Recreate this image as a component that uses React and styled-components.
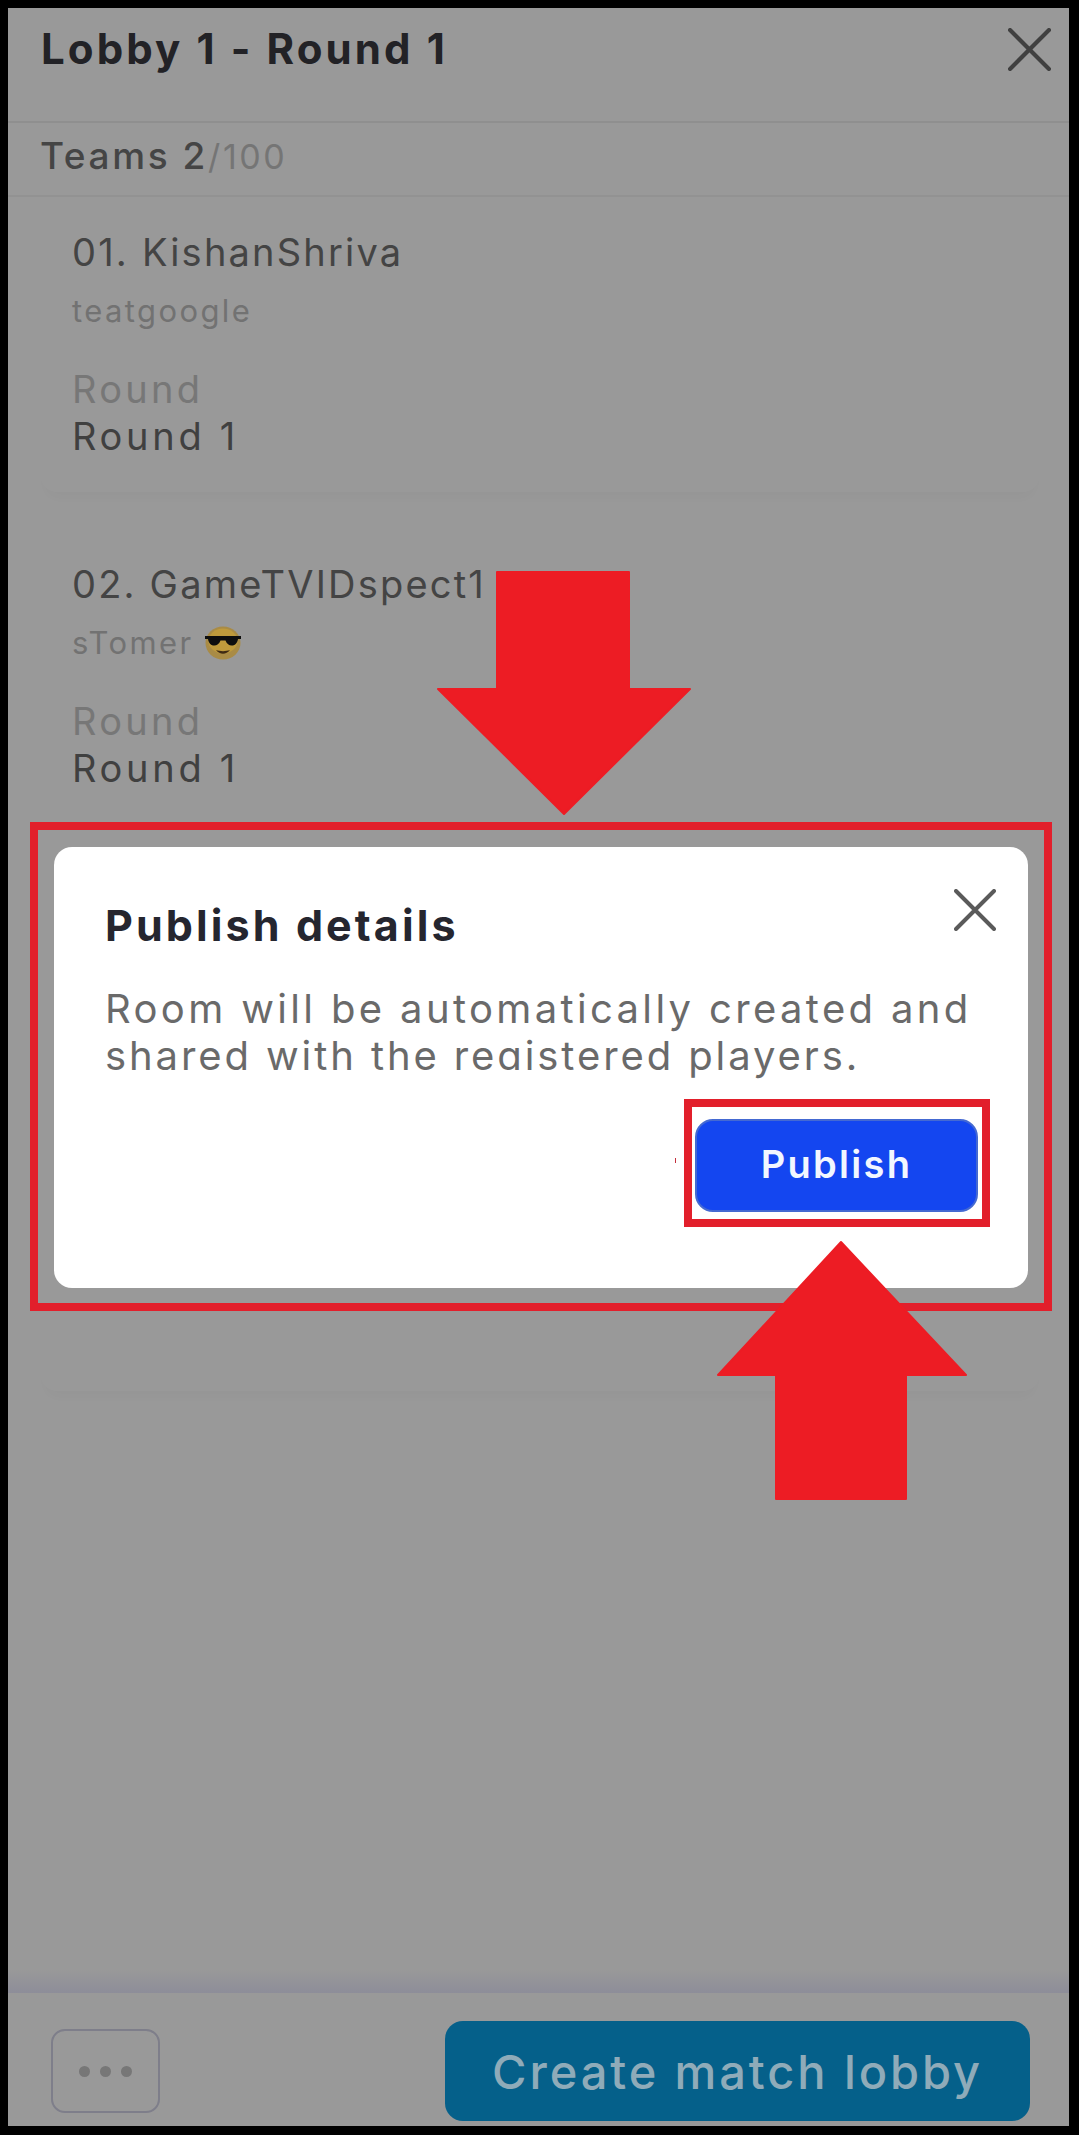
import React from 'react';
import styled, { createGlobalStyle } from 'styled-components';

const GlobalStyle = createGlobalStyle`
  html, body {
    margin: 0;
    background: #000;
  }
  * {
    box-sizing: border-box;
  }
`;

const FONT = '"Inter", "Liberation Sans", sans-serif';

const Page = styled.div`
  position: relative;
  width: 1079px;
  height: 2135px;
  padding: 8px 10px 9px 8px;
  background: #000;
  font-family: ${FONT};
  overflow: hidden;
`;

const Screen = styled.div`
  display: flex;
  flex-direction: column;
  height: 100%;
  background: #999999;
`;

const Header = styled.header`
  display: flex;
  justify-content: space-between;
  align-items: flex-start;
  height: 115px;
  padding: 20px 18px 0 33px;
  border-bottom: 2px solid #8f8f8f;
`;

const Title = styled.h1`
  margin: 0;
  font-size: 42px;
  line-height: 41px;
  font-weight: 700;
  letter-spacing: 3.1px;
  color: #222226;
`;

const TeamsBar = styled.div`
  height: 74px;
  padding: 15px 0 0 32px;
  border-bottom: 2px solid #929292;
  font-size: 37px;
  line-height: 35px;
  font-weight: 500;
  letter-spacing: 2.6px;
  color: #454545;
`;

const TeamsMax = styled.span`
  font-size: 34px;
  font-weight: 400;
  color: #757575;
`;

const List = styled.div`
  flex: 1;
  display: flex;
  flex-direction: column;
  gap: 37px;
  padding: 0 30px 0 33px;
`;

const Card = styled.section`
  flex: ${(p) => (p.$grow ? '0 0 862px' : '0 0 295px')};
  padding: 36px 0 0 31px;
  border-radius: 0 0 16px 16px;
  box-shadow: 0 10px 14px -8px rgba(0, 0, 0, 0.035);
`;

const TeamName = styled.div`
  font-size: 38px;
  line-height: 38px;
  letter-spacing: 2.2px;
  color: #444444;
`;

const Owner = styled.div`
  display: flex;
  align-items: center;
  gap: 11px;
  height: 29px;
  margin-top: 25px;
  font-size: 31px;
  line-height: 29px;
  letter-spacing: 2.4px;
  color: #727272;
`;

const RoundLabel = styled.div`
  margin-top: 46px;
  font-size: 38px;
  line-height: 37px;
  letter-spacing: 3.3px;
  color: #777777;
`;

const RoundValue = styled.div`
  margin-top: 10px;
  font-size: 38px;
  line-height: 37px;
  letter-spacing: 3.7px;
  color: #404040;
`;

const Fade = styled.div`
  height: 23px;
  background: linear-gradient(#999999, #8d8d99);
`;

const Footer = styled.footer`
  display: flex;
  justify-content: space-between;
  align-items: center;
  height: 133px;
  padding: 28px 39px 5px 43px;
`;

const MoreButton = styled.button`
  display: flex;
  justify-content: center;
  align-items: center;
  gap: 10px;
  width: 109px;
  height: 84px;
  padding: 0;
  background: transparent;
  border: 2px solid #7e7e8a;
  border-radius: 14px;
`;

const Dot = styled.span`
  width: 11px;
  height: 11px;
  border-radius: 50%;
  background: #777777;
`;

const CreateButton = styled.button`
  width: 585px;
  height: 100px;
  padding: 0;
  background: #05608a;
  border: none;
  border-radius: 18px;
  font-family: ${FONT};
  font-size: 47px;
  font-weight: 500;
  letter-spacing: 2.9px;
  color: #8fabb9;
`;

const Highlight = styled.div`
  position: absolute;
  top: 822px;
  left: 30px;
  width: 1022px;
  height: 489px;
  border: 8px solid #e21f2b;
`;

const Modal = styled.div`
  position: absolute;
  top: 17px;
  left: 16px;
  width: 974px;
  height: 441px;
  padding: 42px 38px 0 51px;
  display: flex;
  flex-direction: column;
  background: #ffffff;
  border-radius: 18px;
`;

const ModalHead = styled.div`
  display: flex;
  justify-content: space-between;
  align-items: flex-start;
  margin-right: -6px;
`;

const ModalTitle = styled.h2`
  margin: 15px 0 0;
  font-size: 43px;
  line-height: 42px;
  font-weight: 700;
  letter-spacing: 3.1px;
  color: #25262f;
`;

const ModalText = styled.p`
  position: relative;
  margin: 39px -20px 0 0;
  font-size: 40px;
  line-height: 47px;
  white-space: nowrap;
  color: #6a6a6a;

  &::after {
    content: '';
    position: absolute;
    left: 0;
    bottom: 0;
    width: 583px;
    height: 9px;
    background: #ffffff;
  }
`;

const TextLine = styled.span`
  display: block;
  letter-spacing: ${(p) => p.$spacing}px;
`;

const PublishBox = styled.div`
  position: relative;
  align-self: flex-end;
  flex: none;
  width: 306px;
  height: 128px;
  margin-top: 20px;
  padding: 12px 4px 7px 3px;
  border: 8px solid #e21f2b;

  &::before {
    content: '';
    position: absolute;
    left: -17px;
    top: 51px;
    width: 1px;
    height: 5px;
    background: #c4303d;
  }
`;

const PublishButton = styled.button`
  width: 100%;
  height: 100%;
  padding: 0 0 3px;
  background: #1446f0;
  border: 2px solid #4469d2;
  border-radius: 18px;
  font-family: ${FONT};
  font-size: 38px;
  font-weight: 600;
  letter-spacing: 2.3px;
  color: #f2f7ff;
`;

const Arrow = styled.svg`
  position: absolute;
  top: ${(p) => p.$top}px;
  left: ${(p) => p.$left}px;
`;

function CloseIcon({ size, color, stroke }) {
  return (
    <svg width={size} height={size} viewBox="0 0 42 42" fill="none">
      <path
        d="M2 2L40 40M40 2L2 40"
        stroke={color}
        strokeWidth={stroke}
        strokeLinecap="round"
      />
    </svg>
  );
}

function CoolEmoji() {
  return (
    <svg width="36" height="34" viewBox="0 0 36 34" style={{ flex: 'none' }}>
      <ellipse cx="18" cy="17" rx="17.5" ry="16.5" fill="#a98b45" />
      <ellipse cx="18" cy="15" rx="14.5" ry="12.5" fill="#bf9a3c" />
      <path
        d="M0 10H36V13L33 13C32 21 23 22 20.5 14.5H15.5C13 22 4 21 3 13L0 13Z"
        fill="#0e0e0e"
      />
      <path d="M11 24C15 29 21 29 25 24C21 25.5 15 25.5 11 24Z" fill="#3f2a14" />
    </svg>
  );
}

function TeamCard({ index, name, owner, emoji, grow }) {
  return (
    <Card $grow={grow}>
      <TeamName>
        {index}. {name}
      </TeamName>
      <Owner>
        {owner}
        {emoji && <CoolEmoji />}
      </Owner>
      <RoundLabel>Round</RoundLabel>
      <RoundValue>Round 1</RoundValue>
    </Card>
  );
}

export default function App() {
  return (
    <Page>
      <GlobalStyle />
      <Screen>
        <Header>
          <Title>Lobby 1 - Round 1</Title>
          <CloseIcon size={43} color="#404040" stroke={4} />
        </Header>
        <TeamsBar>
          Teams 2<TeamsMax>/100</TeamsMax>
        </TeamsBar>
        <List>
          <TeamCard index="01" name="KishanShriva" owner="teatgoogle" />
          <TeamCard index="02" name="GameTVIDspect1" owner="sTomer" emoji grow />
        </List>
        <Fade />
        <Footer>
          <MoreButton>
            <Dot />
            <Dot />
            <Dot />
          </MoreButton>
          <CreateButton>Create match lobby</CreateButton>
        </Footer>
      </Screen>

      <Highlight>
        <Modal>
          <ModalHead>
            <ModalTitle>Publish details</ModalTitle>
            <CloseIcon size={42} color="#5a5a5a" stroke={4} />
          </ModalHead>
          <ModalText>
            <TextLine $spacing={3.35}>Room will be automatically created and</TextLine>
            <TextLine $spacing={2.9}>shared with the registered players.</TextLine>
          </ModalText>
          <PublishBox>
            <PublishButton>Publish</PublishButton>
          </PublishBox>
        </Modal>
      </Highlight>

      <Arrow $top={571} $left={436} width="256" height="245" viewBox="0 0 256 245">
        <polygon
          points="61,1 193,1 193,118 254,118 128,243 2,118 61,118"
          fill="#ed1c24"
          stroke="#ed1c24"
          strokeWidth="2"
          strokeLinejoin="round"
        />
      </Arrow>
      <Arrow $top={1240} $left={716} width="252" height="261" viewBox="0 0 252 261">
        <polygon
          points="125,2 250,135 190,135 190,259 60,259 60,135 2,135"
          fill="#ed1c24"
          stroke="#ed1c24"
          strokeWidth="2"
          strokeLinejoin="round"
        />
      </Arrow>
    </Page>
  );
}
